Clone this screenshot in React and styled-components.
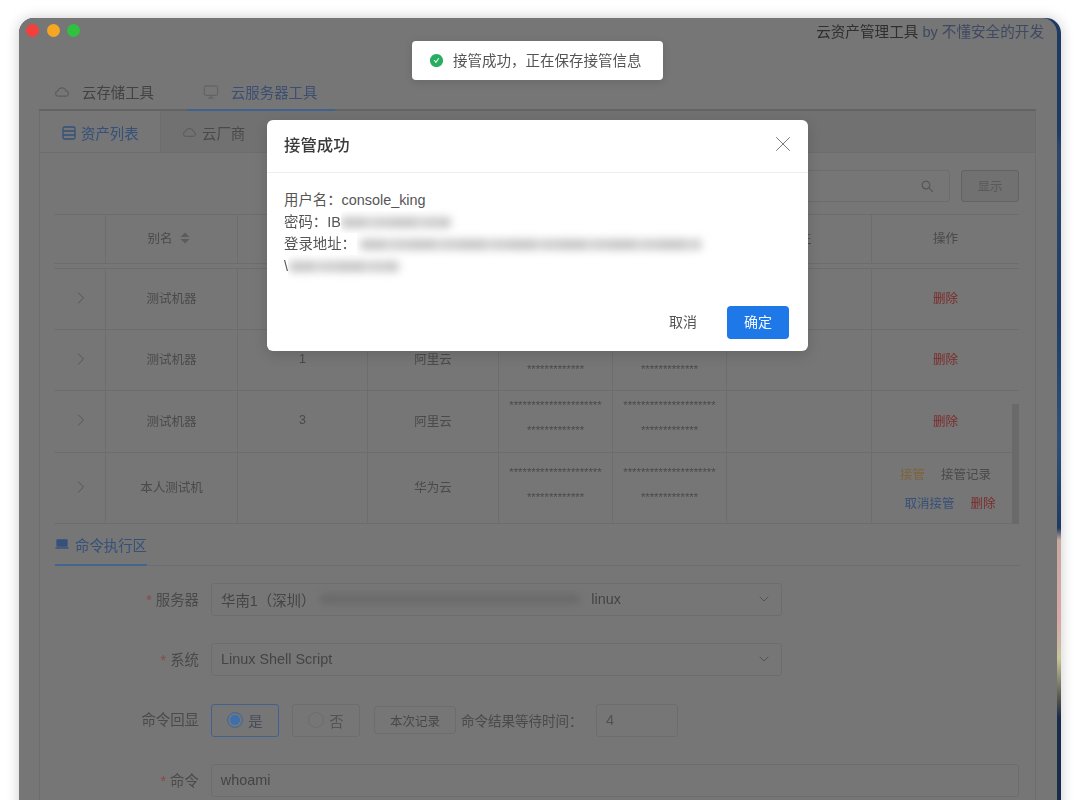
import React from 'react'
import styled, { createGlobalStyle } from 'styled-components'
import { AiOutlineCloud, AiFillCheckCircle, AiOutlineSearch } from 'react-icons/ai'
import { ChevronDown, ChevronRight, Monitor, X } from 'lucide-react'

const dim = {
  bg: '#767676',
  strip: '#717171',
  line: '#6d6d6d',
  lineDark: '#636363',
  text: '#4a4a4a',
  dark: '#353535',
  blue: '#35507a',
  red: '#7c2a2a',
  orange: '#7e643a',
}

const Global = createGlobalStyle`
  html, body { margin: 0; padding: 0; background: #fff; }
  body { font-family: "Liberation Sans", "Noto Sans CJK SC", sans-serif; }
  * { box-sizing: border-box; }
`

const Page = styled.div`
  position: relative;
  width: 1080px;
  height: 800px;
  padding: 18px 19px 0;
  overflow: hidden;
`

const Frame = styled.div`
  height: 800px;
  padding-right: 4px;
  border-radius: 15px 15px 0 0;
  box-shadow: 0 0 14px rgba(0, 0, 0, 0.2);
  background: linear-gradient(
    #1d3a62 0, #1d3a62 115px, #2c4668 130px, #1f3d66 300px, #2e5078 420px,
    #1d3a62 510px, #c9a9a0 522px, #d9a8a6 600px, #cbb8a4 625px, #c9c49a 640px,
    #55574f 680px, #1a2a4a 700px, #1a2a4a 782px
  );
`

const Window = styled.div`
  height: 100%;
  background: ${dim.bg};
  border-radius: 15px 15px 0 0;
  overflow: hidden;
  filter: blur(0.3px);
`

const TitleBar = styled.div`
  display: flex;
  justify-content: space-between;
  height: 26px;
  padding: 6px 13px 0 7px;
`

const Lights = styled.div`
  display: flex;
  gap: 7.5px;
`

const Light = styled.span`
  width: 13px;
  height: 13px;
  border-radius: 50%;
  background: ${p => p.$color};
`

const AppTitle = styled.div`
  margin-top: 1px;
  font-size: 14.6px;
  line-height: 14px;
  color: #2f2f2f;
`

const Author = styled.span`
  color: #3e4a62;
`

const TopTabs = styled.div`
  display: flex;
  gap: 15px;
  height: 67px;
  margin: 0 21px 0 20px;
  padding: 30px 0 0 0;
  border-bottom: 2px solid ${dim.lineDark};
`

const TopTab = styled.div`
  display: flex;
  align-items: center;
  height: 37px;
  padding: 0 18px 0 ${p => (p.$active ? 16 : 15)}px;
  font-size: 14.4px;
  color: ${p => (p.$active ? '#3c4e72' : '#424242')};
  border-bottom: 2px solid ${p => (p.$active ? '#41618f' : 'transparent')};
  svg { margin-right: 12px; color: #5c5c5c; }
`

const Panel = styled.div`
  height: 700px;
  margin: 0 21px 0 20px;
  border: 1px solid ${dim.line};
  border-top: 0;
`

const PanelTabs = styled.div`
  display: flex;
  height: 42px;
  background: ${dim.strip};
  border-bottom: 1px solid ${dim.line};
`

const PanelTab = styled.div`
  display: flex;
  align-items: center;
  gap: 5px;
  padding-top: 2px;
  font-size: 14.4px;
  color: ${p => (p.$active ? dim.blue : dim.text)};
  ${p => p.$active
    ? `width: 121px; padding-left: 22px; background: ${dim.bg}; border-right: 1px solid ${dim.line};`
    : 'padding-left: 21px;'}
`

const PanelBody = styled.div`
  padding: 17px 16px 0 14px;
`

const SearchRow = styled.div`
  display: flex;
  justify-content: flex-end;
  gap: 11px;
  height: 32px;
  margin-bottom: 12px;
`

const SearchBox = styled.div`
  display: flex;
  align-items: center;
  justify-content: flex-end;
  width: 300px;
  padding-right: 14px;
  border: 1px solid ${dim.line};
  border-radius: 3px;
  color: #555;
`

const ShowButton = styled.div`
  display: flex;
  align-items: center;
  justify-content: center;
  width: 58px;
  padding-bottom: 2px;
  border: 1px solid ${dim.lineDark};
  border-radius: 3px;
  background: #717171;
  font-size: 12.5px;
  color: #595959;
`

const Table = styled.div`
  position: relative;
  width: 965px;
  height: 310px;
`

const Row = styled.div`
  display: grid;
  grid-template-columns: 51px 132px 130px 131px 114px 114px 145px 148px;
  height: ${p => p.$height}px;
  margin-bottom: ${p => p.$gap || 0}px;
  border-bottom: 1px solid ${dim.line};
  ${p => p.$first && `border-top: 1px solid ${dim.line};`}
`

const Cell = styled.div`
  display: flex;
  flex-direction: column;
  align-items: center;
  justify-content: center;
  padding-bottom: 3px;
  font-size: 12.5px;
  color: ${dim.text};
  border-left: 1px solid ${dim.line};
  &:first-child { border-left: 0; padding-left: 3px; }
`

const SortMark = styled.span`
  display: inline-flex;
  align-items: center;
  gap: 7px;
  padding-right: 6px;
`

const Stars = styled.div`
  position: relative;
  top: -2px;
  font-size: 11.3px;
  line-height: 25px;
  height: 25px;
  color: #4b4b4b;
`

const Action = styled.span`
  font-size: 12.5px;
  color: ${p => p.$color};
`

const ActionLine = styled.div`
  display: flex;
  justify-content: center;
  gap: ${p => p.$gap}px;
  margin-left: ${p => p.$shift || 0}px;
  line-height: 29px;
`

const ActionStack = styled.div`
  padding-top: 7px;
`

const ScrollThumb = styled.div`
  position: absolute;
  right: 0;
  bottom: 0;
  width: 7px;
  height: 120px;
  background: #6a6a6a;
`

const SectionTabs = styled.div`
  display: flex;
  height: 42px;
  width: 966px;
  padding: 0 0 0 1px;
  border-bottom: 1px solid ${dim.line};
`

const SectionTab = styled.div`
  display: flex;
  align-items: center;
  gap: 6px;
  height: 42px;
  width: 92px;
  font-size: 14.4px;
  white-space: nowrap;
  color: ${dim.blue};
  border-bottom: 2px solid #44658f;
`

const Form = styled.div`
  display: flex;
  flex-direction: column;
  gap: 27.4px;
  margin-top: 17px;
`

const FormRow = styled.div`
  display: flex;
  align-items: center;
  height: 33px;
`

const Label = styled.div`
  width: 145px;
  margin-right: 12px;
  padding-bottom: 3px;
  text-align: right;
  font-size: 14.4px;
  color: ${dim.text};
`

const Required = styled.span`
  margin-right: 4px;
  color: #8a4646;
`

const Field = styled.div`
  display: flex;
  align-items: center;
  width: ${p => p.$width}px;
  height: 33px;
  padding: 0 9px 1px;
  border: 1px solid ${dim.line};
  border-radius: 3px;
  font-size: 14.4px;
  color: ${p => (p.$soft ? '#515151' : '#444')};
  svg { margin-left: auto; color: #4e4e4e; }
`

const FieldBlur = styled.span`
  width: 260px;
  height: 10px;
  margin: 0 11px 0 5px;
  background: #6a6a6a;
  border-radius: 4px;
  filter: blur(3.5px);
`

const RadioButton = styled.div`
  display: flex;
  align-items: center;
  justify-content: center;
  gap: 5px;
  width: 68px;
  height: 33px;
  margin-right: ${p => p.$gap}px;
  border: 1px solid ${p => (p.$on ? '#44618d' : dim.line)};
  border-radius: 3px;
  font-size: 14.4px;
  color: ${p => (p.$on ? '#474d59' : '#545454')};
`

const RadioDot = styled.span`
  display: block;
  width: 16px;
  height: 16px;
  border-radius: 50%;
  border: 1px solid ${p => (p.$on ? '#44699c' : dim.line)};
  ${p => p.$on && 'background: #3c6fae; box-shadow: inset 0 0 0 2px #767676;'}
`

const RecordButton = styled.div`
  display: flex;
  align-items: center;
  justify-content: center;
  width: 82px;
  height: 28px;
  border: 1px solid ${dim.line};
  border-radius: 3px;
  font-size: 12.5px;
  color: #484848;
`

const WaitLabel = styled.div`
  width: 122px;
  margin: 0 13px 0 5px;
  white-space: nowrap;
  font-size: 13.5px;
  color: ${dim.text};
`

const Toast = styled.div`
  position: absolute;
  left: 412px;
  top: 41px;
  display: flex;
  align-items: center;
  gap: 9px;
  width: 251px;
  height: 39px;
  padding-left: 17px;
  background: #fff;
  border-radius: 4px;
  box-shadow: 0 2px 8px rgba(0, 0, 0, 0.12);
  font-size: 14.5px;
  color: #555;
  svg { color: #27ae60; }
`

const Modal = styled.div`
  position: absolute;
  left: 267px;
  top: 120px;
  display: flex;
  flex-direction: column;
  width: 541px;
  height: 231px;
  background: #fff;
  border-radius: 6px;
  box-shadow: 0 4px 14px rgba(0, 0, 0, 0.14);
`

const ModalHead = styled.div`
  display: flex;
  align-items: center;
  justify-content: space-between;
  height: 53px;
  padding: 0 12px 4px 17px;
  border-bottom: 1px solid #eeeeee;
  svg { color: #777; }
`

const ModalTitle = styled.div`
  font-size: 16.4px;
  font-weight: 500;
  color: #3a3a3a;
`

const ModalBody = styled.div`
  flex: 1;
  padding: 16px 17px 0;
  font-size: 14.4px;
  line-height: 22px;
  color: #555;
`

const Line = styled.div`
  display: flex;
  align-items: center;
  height: 22px;
`

const Plain = styled.span`
  position: relative;
  z-index: 1;
  background: #fff;
  white-space: nowrap;
  ${p => p.$patch && 'padding-right: 1px;'}
`

const Redacted = styled.span`
  width: ${p => p.$width}px;
  height: 11px;
  margin-left: ${p => p.$left || 0}px;
  background: repeating-linear-gradient(90deg, #c6c6c6 0 26px, #d8d8d8 26px 32px, #cdcdcd 32px 50px);
  border-radius: 4px;
  filter: blur(4px);
`

const ModalFoot = styled.div`
  display: flex;
  align-items: flex-end;
  justify-content: flex-end;
  gap: 30px;
  height: 66px;
  padding: 0 19px 12px 0;
`

const CancelButton = styled.div`
  display: flex;
  align-items: center;
  height: 33px;
  padding-bottom: 3px;
  font-size: 14px;
  color: #555;
`

const OkButton = styled.div`
  display: flex;
  align-items: center;
  justify-content: center;
  width: 62px;
  height: 33px;
  padding-bottom: 3px;
  background: #1f78e8;
  border-radius: 4px;
  font-size: 14px;
  color: #f2f7ff;
`

const ToastText = styled.span`
  padding-bottom: 2px;
`

const RowsIcon = () => (
  <svg width="14" height="14" viewBox="0 0 14 14" fill="none" stroke={dim.blue} strokeWidth="1.3">
    <rect x="1" y="1" width="12" height="12" rx="1.5" />
    <path d="M1 5h12M1 9h12" />
  </svg>
)

const LaptopIcon = () => (
  <svg width="15" height="12" viewBox="0 0 15 12">
    <rect x="1.5" y="1" width="12" height="8" rx="1" fill={dim.blue} />
    <rect x="0.5" y="9.5" width="14" height="1.5" fill={dim.blue} />
  </svg>
)

const SortIcon = () => (
  <svg width="10" height="12" viewBox="0 0 10 12" fill="#5c5c5c">
    <path d="M5 0.5 9.5 5H0.5zM5 11.5 0.5 7H9.5z" />
  </svg>
)

const STARS_A = '*'.repeat(21)
const STARS_B = '*'.repeat(13)

const machines = [
  { id: 'a', height: 62, name: '测试机器', num: '', cloud: '阿里云' },
  { id: 'b', height: 61, name: '测试机器', num: '1', cloud: '阿里云' },
  { id: 'c', height: 62, name: '测试机器', num: '3', cloud: '阿里云' },
  { id: 'd', height: 71, name: '本人测试机', num: '', cloud: '华为云', owned: true },
]

const App = () => (
  <Page>
    <Global />
    <Frame>
      <Window>
        <TitleBar>
          <Lights>
            <Light $color="#f2413d" />
            <Light $color="#f5a623" />
            <Light $color="#2fc13f" />
          </Lights>
          <AppTitle>云资产管理工具 <Author>by 不懂安全的开发</Author></AppTitle>
        </TitleBar>

        <TopTabs>
          <TopTab><AiOutlineCloud size={16} />云存储工具</TopTab>
          <TopTab $active><Monitor size={16} strokeWidth={1.2} />云服务器工具</TopTab>
        </TopTabs>

        <Panel>
          <PanelTabs>
            <PanelTab $active><RowsIcon />资产列表</PanelTab>
            <PanelTab><AiOutlineCloud size={15} color="#5e5e5e" />云厂商</PanelTab>
          </PanelTabs>

          <PanelBody>
            <SearchRow>
              <SearchBox><AiOutlineSearch size={15} /></SearchBox>
              <ShowButton>显示</ShowButton>
            </SearchRow>

            <Table>
              <Row $height={50} $gap={4} $first>
                <Cell />
                <Cell><SortMark>别名 <SortIcon /></SortMark></Cell>
                <Cell>序号</Cell>
                <Cell>云厂商</Cell>
                <Cell>AK</Cell>
                <Cell>SK</Cell>
                <Cell>备注</Cell>
                <Cell>操作</Cell>
              </Row>
              {machines.map((m, i) => (
                <Row key={m.id} $height={m.height} $first={i === 0}>
                  <Cell><ChevronRight size={20} strokeWidth={0.9} color="#4a4a4a" /></Cell>
                  <Cell>{m.name}</Cell>
                  <Cell>{m.num}</Cell>
                  <Cell>{m.cloud}</Cell>
                  <Cell><Stars>{STARS_A}</Stars><Stars>{STARS_B}</Stars></Cell>
                  <Cell><Stars>{STARS_A}</Stars><Stars>{STARS_B}</Stars></Cell>
                  <Cell />
                  <Cell>
                    {m.owned ? (
                      <ActionStack>
                        <ActionLine $gap={16}>
                          <Action $color={dim.orange}>接管</Action>
                          <Action $color={dim.text}>接管记录</Action>
                        </ActionLine>
                        <ActionLine $gap={16} $shift={9}>
                          <Action $color={dim.blue}>取消接管</Action>
                          <Action $color={dim.red}>删除</Action>
                        </ActionLine>
                      </ActionStack>
                    ) : (
                      <Action $color={dim.red}>删除</Action>
                    )}
                  </Cell>
                </Row>
              ))}
              <ScrollThumb />
            </Table>

            <SectionTabs>
              <SectionTab><LaptopIcon />命令执行区</SectionTab>
            </SectionTabs>

            <Form>
              <FormRow>
                <Label><Required>*</Required>服务器</Label>
                <Field $width={571}>
                  华南1&#xFF08;深圳&#xFF09;
                  <FieldBlur />
                  linux
                  <ChevronDown size={16} strokeWidth={1.3} />
                </Field>
              </FormRow>
              <FormRow>
                <Label><Required>*</Required>系统</Label>
                <Field $width={571}>
                  Linux Shell Script
                  <ChevronDown size={16} strokeWidth={1.3} />
                </Field>
              </FormRow>
              <FormRow>
                <Label>命令回显</Label>
                <RadioButton $on $gap={13}><RadioDot $on />是</RadioButton>
                <RadioButton $gap={14}><RadioDot />否</RadioButton>
                <RecordButton>本次记录</RecordButton>
                <WaitLabel>命令结果等待时间&#xFF1A;</WaitLabel>
                <Field $width={82} $soft>4</Field>
              </FormRow>
              <FormRow>
                <Label><Required>*</Required>命令</Label>
                <Field $width={809}>whoami</Field>
              </FormRow>
            </Form>
          </PanelBody>
        </Panel>
      </Window>
    </Frame>

    <Toast>
      <AiFillCheckCircle size={15} />
      <ToastText>接管成功&#xFF0C;正在保存接管信息</ToastText>
    </Toast>

    <Modal>
      <ModalHead>
        <ModalTitle>接管成功</ModalTitle>
        <X size={26} strokeWidth={0.9} />
      </ModalHead>
      <ModalBody>
        <Line><Plain>用户名&#xFF1A;console_king</Plain></Line>
        <Line><Plain>密码&#xFF1A;IB</Plain><Redacted $width={110} /></Line>
        <Line><Plain $patch>登录地址&#xFF1A;</Plain><Redacted $width={342} $left={3} /></Line>
        <Line><Plain>\</Plain><Redacted $width={110} $left={1} /></Line>
      </ModalBody>
      <ModalFoot>
        <CancelButton>取消</CancelButton>
        <OkButton>确定</OkButton>
      </ModalFoot>
    </Modal>
  </Page>
)

export default App
